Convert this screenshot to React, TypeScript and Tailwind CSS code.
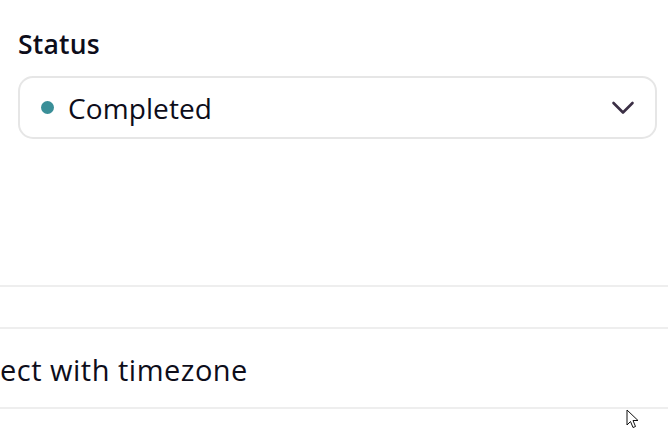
import React from "react";

export default function App() {
  return (
    <div className="w-[668px] h-[433px] overflow-hidden bg-white text-[#0d0d1a] relative" style={{ fontFamily: '"Open Sans", sans-serif' }}>
      <div className="pl-[18px] pr-[11px] pt-[26px]">
        <div className="text-[26.5px] leading-[36px] font-semibold tracking-[0.2px]">Status</div>
        <div className="mt-[14px] h-[63px] rounded-[15px] border-2 border-[#e6e6e6] flex items-center pl-[21px] pr-[20px]">
          <span className="w-[13px] h-[13px] rounded-full bg-[#3a8f98]" />
          <span className="ml-[14px] text-[28px] leading-none tracking-[0.1px]">Completed</span>
          <svg className="ml-auto" width="24" height="14" viewBox="0 0 24 14" fill="none" stroke="#3b2f45" strokeWidth="2.6" strokeLinecap="round" strokeLinejoin="round">
            <path d="M2.5 2 L12 11.5 L21.5 2" />
          </svg>
        </div>
      </div>
      <div className="mt-[146px] border-b-2 border-[#eeeeee]" />
      <div className="h-[42px] border-b-2 border-[#eeeeee]" />
      <div className="h-[80px] border-b-2 border-[#eeeeee] flex items-center overflow-hidden pt-[2px]">
        <span className="-ml-[41px] whitespace-nowrap text-[29px] leading-none tracking-[0.5px]">Select with timezone</span>
      </div>
      <svg className="absolute left-[626px] top-[409px]" width="14" height="20" viewBox="0 0 14 20">
        <path d="M1 1 L1 16 L4.5 12.5 L7 18.5 L9.5 17.5 L7 11.5 L12 11.5 Z" fill="white" stroke="#111" strokeWidth="1" strokeLinejoin="round" />
      </svg>
    </div>
  );
}
